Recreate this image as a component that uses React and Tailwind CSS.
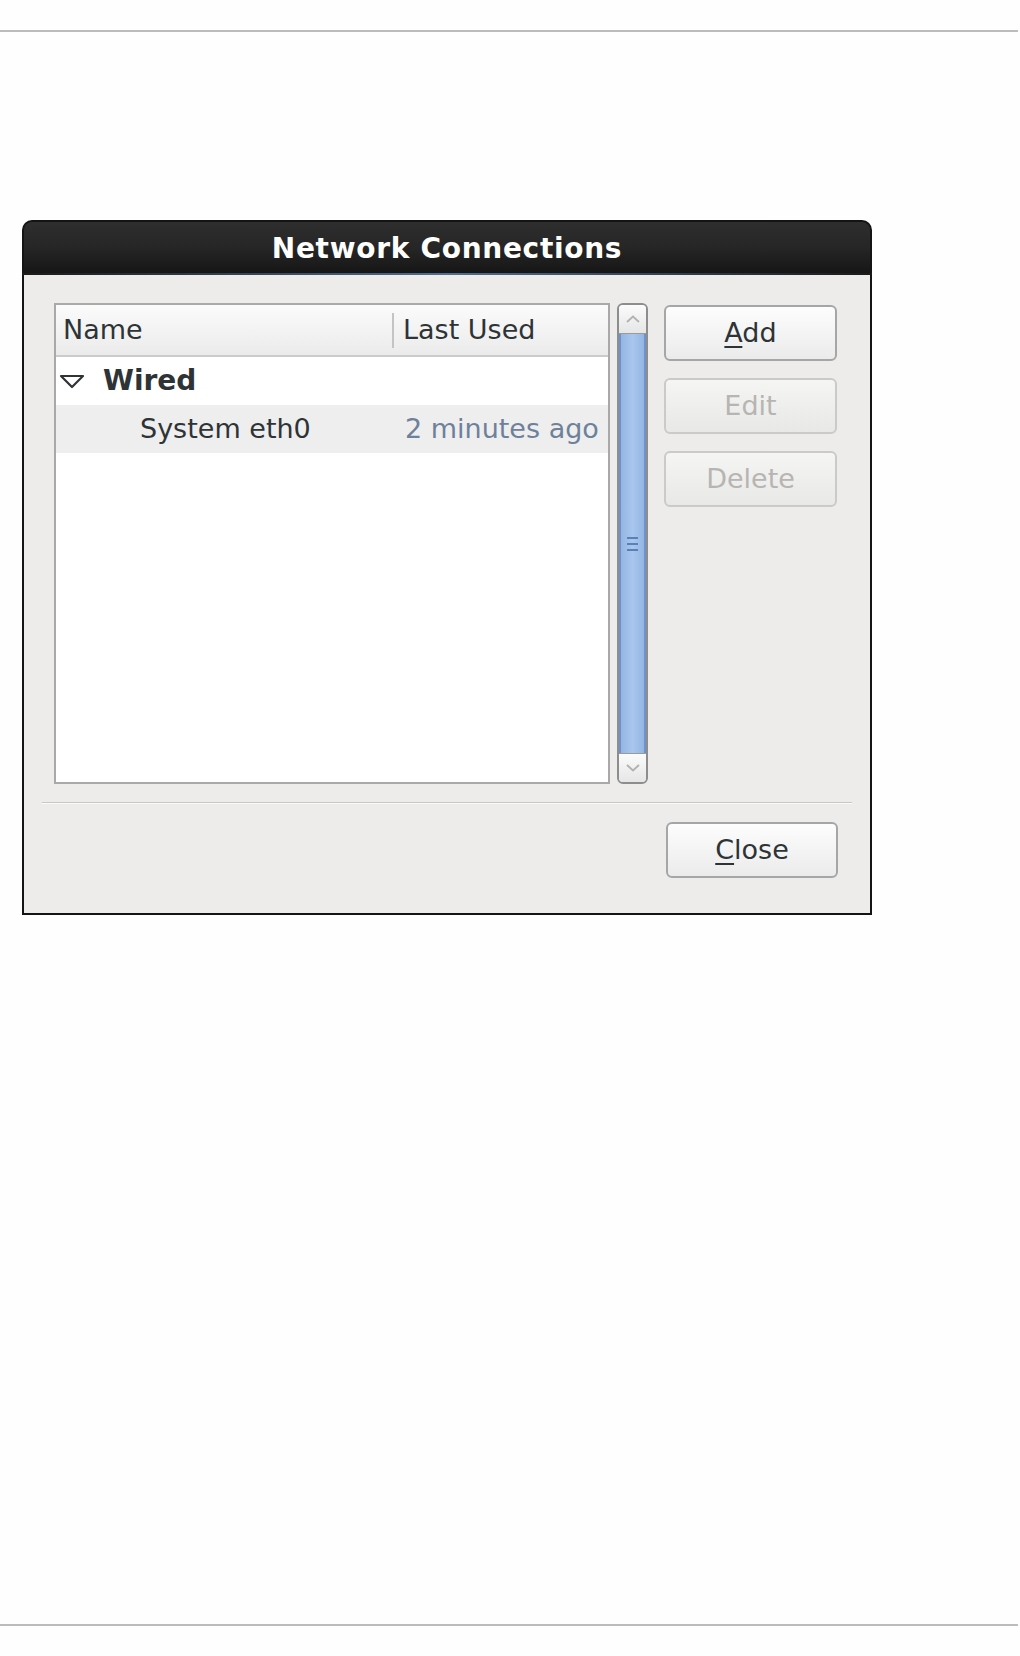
export default function App() {
  return (
    <div className="min-h-[1656px] bg-[#fefefe] pt-[30px] font-['DejaVu_Sans',sans-serif] text-[#2e3436]">
      {/* top rule */}
      <div className="h-[2px] w-[1018px] bg-[#bcbcbc]" />

      <div className="mt-[188px] ml-[22px] w-[850px]">
        <Dialog />
      </div>

      {/* bottom rule */}
      <div className="mt-[709px] h-[2px] w-[1018px] bg-[#bcbcbc]" />
    </div>
  )
}

function Dialog() {
  return (
    <div>
      {/* Title bar */}
      <div className="h-[53px] rounded-t-[10px] border-x-2 border-t-2 border-[#141414] bg-gradient-to-b from-[#2e2e2e] via-[#262626] to-[#161616] flex items-center justify-center">
        <span className="text-white font-bold text-[28px] tracking-[0.7px] leading-none pt-[2px]">Network Connections</span>
      </div>
      <div className="h-[2px] bg-gradient-to-r from-[#1a1a1a] via-[#4f6f95] to-[#1a1a1a]" />

      {/* Body */}
      <div className="border-x-2 border-b-2 border-[#141414] bg-[#edecea] px-[18px] pt-[28px] pb-[35px]">
        <div className="flex pl-[12px] pr-[15px] h-[481px]">
          <ConnectionList />
          <Scrollbar />
          <div className="ml-[16px] w-[173px] mt-[2px] flex flex-col gap-[17px]">
            <Button><span className="underline underline-offset-[4px]">A</span>dd</Button>
            <Button disabled>Edit</Button>
            <Button disabled>Delete</Button>
          </div>
        </div>

        {/* separator */}
        <div className="mt-[18px] h-[1px] bg-[#c8c7c5]" />
        <div className="h-[1px] bg-[#fafafa]" />

        <div className="mt-[18px] flex justify-end pr-[14px]">
          <div className="w-[172px]">
            <Button h="h-[56px]"><span className="underline underline-offset-[4px]">C</span>lose</Button>
          </div>
        </div>
      </div>
    </div>
  )
}

function ConnectionList() {
  return (
    <div className="w-[556px] h-full border-2 border-[#a9a9a9] bg-white flex flex-col">
      {/* header */}
      <div className="h-[52px] border-b-2 border-[#cbcbcb] bg-gradient-to-b from-[#fbfbfb] to-[#ebebeb] flex items-center text-[27px]">
        <div className="w-[336px] pl-[7px]">Name</div>
        <div className="w-[2px] h-[35px] bg-[#c4c4c4]" />
        <div className="pl-[9px]">Last Used</div>
      </div>

      {/* Wired group */}
      <div className="h-[48px] flex items-center text-[27px]">
        <svg width="26" height="15" viewBox="0 0 26 15" className="ml-[3px]">
          <polygon points="2,2 24,2 13,13" fill="none" stroke="#2e3436" strokeWidth="2.2" strokeLinejoin="round" />
        </svg>
        <span className="ml-[18px] font-bold text-[28px]">Wired</span>
      </div>

      {/* System eth0 */}
      <div className="h-[48px] bg-[#eeeeee] flex items-center text-[27px]">
        <div className="w-[338px] pl-[84px]">System eth0</div>
        <div className="pl-[11px] text-[#6e819b]">2 minutes ago</div>
      </div>
    </div>
  )
}

function Scrollbar() {
  return (
    <div className="ml-[7px] w-[31px] h-full rounded-[6px] border-2 border-[#8d8d8d] overflow-hidden flex flex-col">
      <div className="h-[29px] bg-gradient-to-b from-[#fbfbfb] to-[#e6e6e6] border-b border-[#9a9a9a] flex items-center justify-center">
        <svg width="14" height="8" viewBox="0 0 14 8">
          <polyline points="1,7 7,1.5 13,7" fill="none" stroke="#b2b2b2" strokeWidth="1.8" />
        </svg>
      </div>
      <div className="flex-1 border-x-2 border-[#6f93c8] bg-gradient-to-r from-[#94b6e3] via-[#a8c6ee] to-[#94b6e3] flex flex-col items-center justify-center gap-[4px]">
        <div className="w-[11px] h-[2px] bg-[#5b80b6]" />
        <div className="w-[11px] h-[2px] bg-[#5b80b6]" />
        <div className="w-[11px] h-[2px] bg-[#5b80b6]" />
      </div>
      <div className="h-[29px] bg-gradient-to-b from-[#fbfbfb] to-[#e6e6e6] border-t border-[#9a9a9a] flex items-center justify-center">
        <svg width="14" height="8" viewBox="0 0 14 8">
          <polyline points="1,1 7,6.5 13,1" fill="none" stroke="#b2b2b2" strokeWidth="1.8" />
        </svg>
      </div>
    </div>
  )
}

function Button({ children, disabled, h = 'h-[56px]' }) {
  return (
    <div
      className={`${h} rounded-[6px] border-2 flex items-center justify-center text-[27px] bg-gradient-to-b ${
        disabled
          ? 'border-[#cbcac8] from-[#f5f5f4] to-[#e8e8e7] text-[#b7b5b2]'
          : 'border-[#a6a6a6] from-[#fdfdfd] to-[#ebebeb] text-[#2e3436]'
      }`}
    >
      <span>{children}</span>
    </div>
  )
}
